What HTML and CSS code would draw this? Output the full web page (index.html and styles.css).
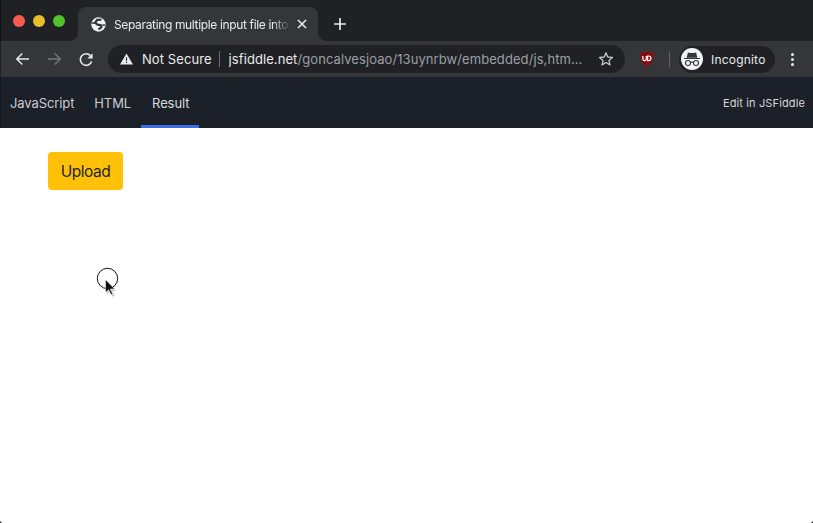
FILE: index.html
```html
<!DOCTYPE html>
<html lang="en">
<head>
<meta charset="utf-8">
<title>Separating multiple input file into</title>
<link rel="stylesheet" href="styles.css">
</head>
<body>
<div class="window">
  <header class="tabstrip">
    <div class="lights">
      <span class="light red"></span>
      <span class="light yellow"></span>
      <span class="light green"></span>
    </div>
    <div class="tab">
      <svg class="globe" width="15" height="15" viewBox="0 0 15 15">
        <circle cx="7.5" cy="7.5" r="7.2" fill="#f1f3f4"/>
        <path d="M10.5 2.6L6 2.8L4.2 5.8L6.6 7.6L10.2 8.4L10.4 10.4L7.4 12.4" fill="none" stroke="#35363a" stroke-width="2.3" stroke-linejoin="round"/>
        <path d="M0.8 6L4 6" stroke="#35363a" stroke-width="1.6"/>
        <path d="M11.5 8.2L14.2 8" stroke="#35363a" stroke-width="1.4"/>
      </svg>
      <span class="tab-title">Separating multiple input file into</span>
      <svg class="close" width="10" height="10" viewBox="0 0 10 10"><path d="M1 1L9 9M9 1L1 9" stroke="#f1f3f4" stroke-width="1.5"/></svg>
    </div>
    <svg class="plus" width="14" height="14" viewBox="0 0 14 14"><path d="M7 1V13M1 7H13" stroke="#e8eaed" stroke-width="1.7"/></svg>
  </header>

  <div class="toolbar">
    <svg class="nav-icon" width="16" height="16" viewBox="0 0 16 16"><path d="M14 8H1.8M7.3 2.5L1.8 8L7.3 13.5" fill="none" stroke="#e8eaed" stroke-width="1.5"/></svg>
    <svg class="nav-icon" width="16" height="16" viewBox="0 0 16 16"><path d="M1 8H13.2M7.7 2.5L13.2 8L7.7 13.5" fill="none" stroke="#75777a" stroke-width="1.5"/></svg>
    <svg class="nav-icon" width="16" height="16" viewBox="0 0 16 16"><path d="M12.6 10.4A5.8 5.8 0 1 1 11.4 4.6" fill="none" stroke="#e8eaed" stroke-width="1.6"/><path d="M13.6 2.2V7.4H8.4Z" fill="#e8eaed"/></svg>
    <div class="omnibox">
      <svg class="warn" width="13" height="12" viewBox="0 0 14 12"><path d="M7 0L14 12H0Z" fill="#e8eaed"/><path d="M6.4 4H7.6V8H6.4ZM6.4 9H7.6V10.2H6.4Z" fill="#202124"/></svg>
      <span class="secure">Not Secure</span>
      <span class="omni-sep"></span>
      <span class="url"><span class="host">jsfiddle.net</span>/goncalvesjoao/13uynrbw/embedded/js,htm...</span>
      <svg class="star" width="16" height="16" viewBox="0 0 16 16"><path d="M8 1.8L9.8 6L14.4 6.4L10.9 9.4L12 13.9L8 11.5L4 13.9L5.1 9.4L1.6 6.4L6.2 6Z" fill="none" stroke="#c4c7c9" stroke-width="1.3" stroke-linejoin="round"/></svg>
    </div>
    <svg class="ublock" width="14" height="16" viewBox="0 0 14 16">
      <path d="M7 0.3C9 1.4 11.5 1.8 13.6 1.8C13.9 8 12 13 7 15.7C2 13 0.1 8 0.4 1.8C2.5 1.8 5 1.4 7 0.3Z" fill="#8a0c10"/>
      <path d="M2.9 5V8A1.7 1.7 0 0 0 6.3 8V5" fill="none" stroke="#fff" stroke-width="1.2"/>
      <path d="M7.6 5V9.7H8.6A2.35 2.35 0 0 0 8.6 5Z" fill="none" stroke="#fff" stroke-width="1.2"/>
    </svg>
    <span class="tool-sep"></span>
    <div class="profile">
      <span class="avatar">
        <svg width="18" height="16" viewBox="0 0 18 16">
          <path d="M1 7H17V8H1ZM3.6 6.8L5 1.2C6.4 2 7 2 9 2C11 2 11.6 2 13 1.2L14.4 6.8Z" fill="#35363a"/>
          <circle cx="5" cy="12" r="2.5" fill="none" stroke="#35363a" stroke-width="1.1"/>
          <circle cx="13" cy="12" r="2.5" fill="none" stroke="#35363a" stroke-width="1.1"/>
          <path d="M7.5 11.5Q9 10.7 10.5 11.5" fill="none" stroke="#35363a" stroke-width="1.1"/>
        </svg>
      </span>
      <span class="profile-name">Incognito</span>
    </div>
    <div class="menu-dots"><span></span><span></span><span></span></div>
  </div>

  <nav class="fiddle-nav">
    <a class="fiddle-tab">JavaScript</a>
    <a class="fiddle-tab">HTML</a>
    <a class="fiddle-tab active">Result</a>
    <a class="edit-link">Edit in JSFiddle</a>
  </nav>

  <main class="result">
    <button class="upload" type="button">Upload</button>
    <svg class="pointer" width="24" height="32" viewBox="0 0 24 32">
      <circle cx="11.5" cy="11.5" r="10.2" fill="none" stroke="#111" stroke-width="1"/>
      <path d="M10 13V27L13 24L15.5 29L18 28L15.5 23.3H19.5Z" fill="#9a9a9a" opacity=".5" transform="translate(.8 .8)"/>
      <path d="M9.5 12.5V25.5L12.6 22.7L15 27.6L16.6 26.8L14.3 22H18.6Z" fill="#111" stroke="#fff" stroke-width=".5"/>
    </svg>
  </main>
</div>
</body>
</html>
```
FILE: styles.css
```css
* { box-sizing: border-box; }
html, body { margin: 0; padding: 0; background: #26272b; }
body { font-family: Inter, "Liberation Sans", sans-serif; }

.window {
  width: 813px;
  height: 523px;
  display: flex;
  flex-direction: column;
  overflow: hidden;
  background: #fff;
  border-radius: 0 0 4px 4px;
}

.tabstrip {
  height: 41px;
  flex: none;
  display: flex;
  align-items: flex-end;
  background: #202124;
  box-shadow: inset 1px 0 0 #111215;
}
.lights {
  width: 78px;
  height: 41px;
  flex: none;
  display: flex;
  align-items: center;
  gap: 8px;
  padding: 0 0 0 13px;
}
.light { width: 12px; height: 12px; border-radius: 50%; }
.red { background: #fb5a52; }
.yellow { background: #e9bd2b; }
.green { background: #53c32b; }

.tab {
  position: relative;
  width: 240px;
  height: 34px;
  flex: none;
  display: flex;
  align-items: center;
  padding: 0 11px 0 13px;
  background: #35363a;
  border-radius: 8px 8px 0 0;
}
.tab::before, .tab::after {
  content: "";
  position: absolute;
  bottom: 0;
  width: 8px;
  height: 8px;
}
.tab::before { left: -8px; background: radial-gradient(circle at 0 0, #202124 7.5px, #35363a 8px); }
.tab::after { right: -8px; background: radial-gradient(circle at 100% 0, #202124 7.5px, #35363a 8px); }
.globe { flex: none; }
.tab-title {
  flex: 1;
  min-width: 0;
  margin-left: 8px;
  font-size: 12px;
  letter-spacing: -0.35px;
  color: #e8eaed;
  white-space: nowrap;
  overflow: hidden;
  -webkit-mask-image: linear-gradient(90deg, #000 90%, transparent 100%);
  mask-image: linear-gradient(90deg, #000 90%, transparent 100%);
}
.close { flex: none; margin-left: 7px; }
.plus { flex: none; margin: 0 0 10px 15px; }

.toolbar {
  height: 36px;
  flex: none;
  display: flex;
  align-items: center;
  padding: 0 0 0 15px;
  background: #35363a;
  box-shadow: inset 1px 0 0 #202124;
}
.nav-icon { flex: none; margin-right: 16px; }
.omnibox {
  width: 517px;
  height: 28px;
  flex: none;
  margin-left: -3px;
  display: flex;
  align-items: center;
  padding: 0 11px 0 12px;
  border-radius: 14px;
  background: #202124;
}
.warn { flex: none; }
.secure { margin-left: 9px; font-size: 13px; letter-spacing: 0.08px; color: #e8eaed; white-space: nowrap; }
.omni-sep { width: 1px; height: 16px; margin: 0 9px 0 7px; background: #6b6d70; flex: none; }
.url { flex: 1; min-width: 0; font-size: 13px; letter-spacing: 0.08px; color: #9aa0a6; white-space: nowrap; overflow: hidden; }
.host { color: #e8eaed; }
.star { flex: none; }
.ublock { flex: none; margin-left: 15px; }
.tool-sep { width: 1px; height: 16px; margin-left: 15px; background: #5f6368; flex: none; }
.profile {
  width: 96px;
  height: 27px;
  flex: none;
  margin-left: 9px;
  display: flex;
  align-items: center;
  padding-left: 2px;
  border-radius: 14px;
  background: #202124;
}
.avatar {
  width: 22px;
  height: 22px;
  flex: none;
  display: flex;
  align-items: center;
  justify-content: center;
  border-radius: 50%;
  background: #f1f3f4;
}
.profile-name { margin-left: 8px; font-size: 12px; letter-spacing: 0.2px; color: #e8eaed; }
.menu-dots { flex: none; margin-left: 16px; display: flex; flex-direction: column; gap: 2px; }
.menu-dots span { width: 3px; height: 3px; border-radius: 50%; background: #e8eaed; }

.fiddle-nav {
  height: 51px;
  flex: none;
  display: flex;
  align-items: stretch;
  background: #1c2028;
  box-shadow: inset 1px 0 0 #15181d;
}
.fiddle-tab {
  display: flex;
  align-items: center;
  padding: 1px 10px 0;
  font-size: 13px;
  letter-spacing: -0.1px;
  color: #c9ccd1;
}
.fiddle-tab.active {
  padding-left: 11px;
  color: #d9dbdf;
  box-shadow: inset 0 -3px 0 #3a6fe2;
}
.edit-link {
  margin-left: auto;
  align-self: center;
  padding: 1px 8px 0 0;
  font-size: 11px;
  letter-spacing: 0.13px;
  color: #d5d7db;
}

.result {
  position: relative;
  flex: 1;
  padding: 24px 0 0 48px;
  background: #fff;
}
.upload {
  display: block;
  width: 75px;
  height: 38px;
  padding: 0;
  border: 0;
  border-radius: 4px;
  background: #ffc107;
  color: #212529;
  font: 15.5px Inter, "Liberation Sans", sans-serif;
  letter-spacing: -0.5px;
}
.pointer { position: absolute; left: 96px; top: 139px; }
```
